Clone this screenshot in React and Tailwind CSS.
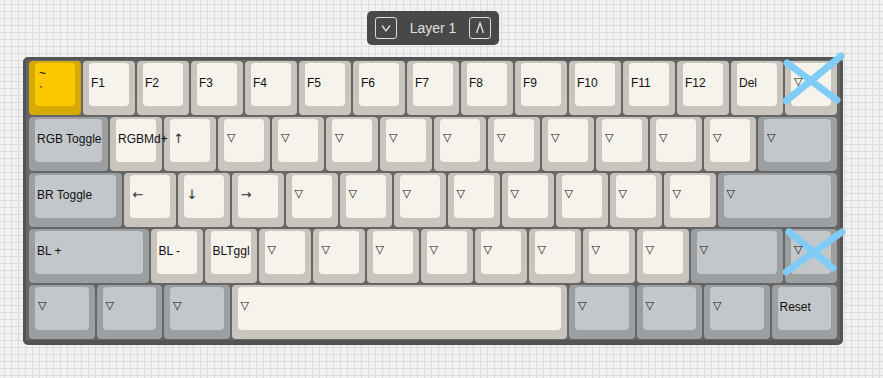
import React from "react";

const W = {
  1: "w-[54px]",
  1.25: "w-[67.5px]",
  1.5: "w-[81px]",
  1.75: "w-[94.5px]",
  2.25: "w-[121.5px]",
  6.25: "w-[337.5px]",
};

const STYLE = {
  l: { base: "bg-[#c9c4bd]", top: "bg-[#f6f2ec]" },
  g: { base: "bg-[#9c9fa1]", top: "bg-[#c3c7ca]" },
  y: { base: "bg-[#d5aa05]", top: "bg-[#fcc800]" },
};

const T = "▽";
const ARROWS = ["←", "↑", "→", "↓"];
const rep = (n, k) => Array.from({ length: n }, () => ({ ...k }));

const rows = [
  [
    { l: "~|`", c: "y", u: 1 },
    ...["F1", "F2", "F3", "F4", "F5", "F6", "F7", "F8", "F9", "F10", "F11", "F12", "Del"].map((l) => ({ l, c: "l", u: 1 })),
    { l: T, c: "l", u: 1 },
  ],
  [
    { l: "RGB Toggle", c: "g", u: 1.5 },
    { l: "RGBMd+", c: "l", u: 1 },
    { l: "↑", c: "l", u: 1 },
    ...rep(10, { l: T, c: "l", u: 1 }),
    { l: T, c: "g", u: 1.5 },
  ],
  [
    { l: "BR Toggle", c: "g", u: 1.75 },
    { l: "←", c: "l", u: 1 },
    { l: "↓", c: "l", u: 1 },
    { l: "→", c: "l", u: 1 },
    ...rep(8, { l: T, c: "l", u: 1 }),
    { l: T, c: "g", u: 2.25 },
  ],
  [
    { l: "BL +", c: "g", u: 2.25 },
    { l: "BL -", c: "l", u: 1 },
    { l: "BLTggl", c: "l", u: 1 },
    ...rep(8, { l: T, c: "l", u: 1 }),
    { l: T, c: "g", u: 1.75 },
    { l: T, c: "g", u: 1 },
  ],
  [
    ...rep(3, { l: T, c: "g", u: 1.25 }),
    { l: T, c: "l", u: 6.25 },
    ...rep(3, { l: T, c: "g", u: 1.25 }),
    { l: "Reset", c: "g", u: 1.25 },
  ],
];

function Label({ l }) {
  if (l === T) {
    return (
      <span className="relative z-10 -mt-[6px] text-[11px] leading-[14px] text-[#111] font-['DejaVu_Sans',sans-serif] pl-[1px]">
        {T}
      </span>
    );
  }
  if (ARROWS.includes(l)) {
    return (
      <span className="relative z-10 -mt-[3px] text-[13px] leading-[14px] text-[#333] font-['DejaVu_Sans',sans-serif] pl-[1px]">
        {l}
      </span>
    );
  }
  if (l === "~|`") {
    return (
      <span className="flex flex-col -mt-[4px] text-[12px] leading-[19px] text-[#111] pl-[2px]">
        <span>~</span>
        <span>`</span>
      </span>
    );
  }
  return (
    <span className="relative z-10 -mt-[4px] text-[12px] leading-[14px] text-[#111] whitespace-nowrap">{l}</span>
  );
}

function Key({ k }) {
  const s = STYLE[k.c];
  return (
    <div className={`${W[k.u]} h-[56px] p-px shrink-0`}>
      <div className={`h-full w-full rounded-[4px] ${s.base} pt-[2px] px-[6px] pb-[9px]`}>
        <div className={`h-full w-full rounded-[4px] ${s.top} flex items-center pl-[2px]`}>
          <Label l={k.l} />
        </div>
      </div>
    </div>
  );
}

function Cross({ x1, y1, x2, y2, x3, y3, x4, y4 }) {
  return (
    <g stroke="#7fcdf6" strokeWidth="7" strokeLinecap="round" fill="none">
      <line x1={x1} y1={y1} x2={x2} y2={y2} />
      <line x1={x3} y1={y3} x2={x4} y2={y4} />
    </g>
  );
}

export default function App() {
  return (
    <div className="relative w-full h-[378px] overflow-hidden bg-[#f1f1f1] bg-[linear-gradient(to_right,#dcdcdc_1px,transparent_1px),linear-gradient(to_bottom,#dcdcdc_1px,transparent_1px)] bg-[size:7px_7px] bg-[position:4px_4px] font-['Liberation_Sans',Arial,sans-serif]">
      <div className="pl-[23px] pt-[11px]">
        <div className="w-[820px] flex flex-col items-center">
          <div className="h-[34px] flex items-center gap-[13px] px-[8px] rounded-[5px] bg-[#484848]">
            <div className="w-[22px] h-[22px] border border-[#dcdcdc] rounded-[3px] flex items-center justify-center">
              <svg width="12" height="12" viewBox="0 0 12 12">
                <polyline points="2,3.5 6,9 10,3.5" fill="none" stroke="#e2e2e2" strokeWidth="1.3" />
              </svg>
            </div>
            <span className="text-[14px] leading-[16px] text-[#e0e0e0]">Layer 1</span>
            <div className="w-[22px] h-[22px] border border-[#dcdcdc] rounded-[3px] flex items-center justify-center">
              <svg width="12" height="14" viewBox="0 0 12 14">
                <polyline points="2.5,12 6,2 9.5,12" fill="none" stroke="#e2e2e2" strokeWidth="1.3" />
              </svg>
            </div>
          </div>
          <div className="mt-[12px] w-[820px] rounded-[5px] bg-[#666666] border-[3px] border-b-[5px] border-[#545454] px-[2px]">
            {rows.map((r, i) => (
              <div key={i} className="flex">
                {r.map((k, j) => (
                  <Key key={j} k={k} />
                ))}
              </div>
            ))}
          </div>
        </div>
      </div>
      <svg className="absolute left-0 top-0 pointer-events-none" width="883" height="378">
        <Cross x1={787} y1={63} x2={837} y2={100} x3={786} y3={101} x4={841} y4={56} />
        <Cross x1={789} y1={232} x2={833} y2={268} x3={786} y3={272} x4={842} y4={232} />
      </svg>
    </div>
  );
}
